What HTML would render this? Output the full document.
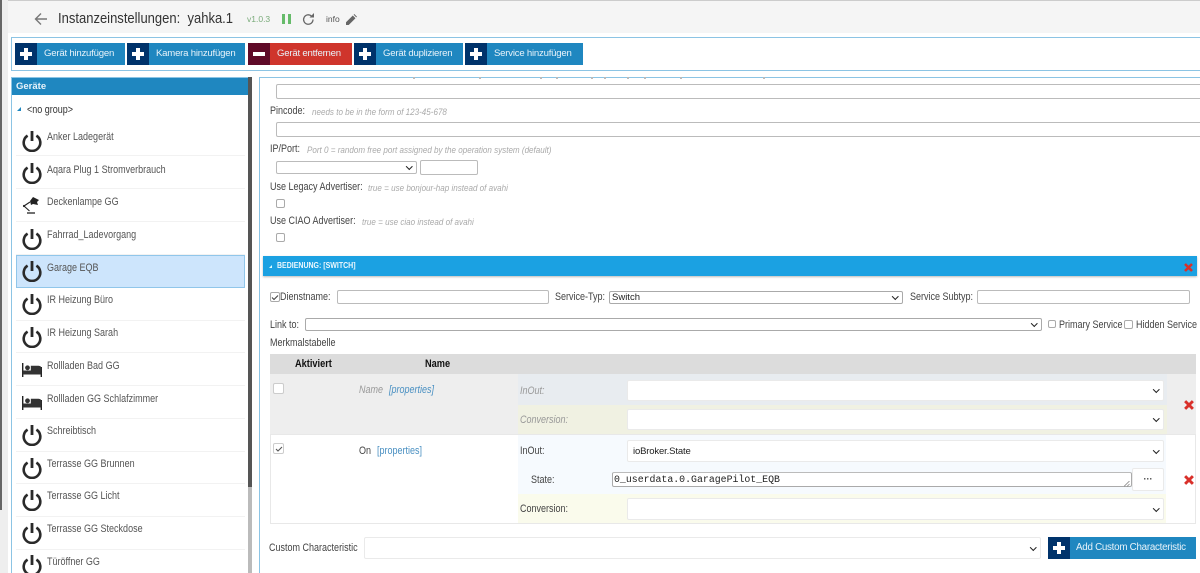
<!DOCTYPE html>
<html><head><meta charset="utf-8"><style>
html,body{margin:0;padding:0;background:#fff}
#p{position:relative;width:1200px;height:573px;overflow:hidden;background:#fff;font-family:"Liberation Sans",sans-serif;font-size:10px;color:#444}
#p div,#p svg{position:absolute;box-sizing:border-box}
.t{white-space:nowrap;line-height:14px;height:14px}
.l{font-size:10.6px;transform:scaleX(.85);transform-origin:left center;margin-top:1px}
.h{font-style:italic;color:#aaa;font-size:9.4px;transform:scaleX(.86);transform-origin:left center;margin-top:1px}
.b{height:22px;background:#1f87c0;color:#e8f3fa;font-size:9.6px;line-height:22px;white-space:nowrap;letter-spacing:-.22px}
.b i{position:absolute;left:0;top:0;width:22px;height:22px;background:#00336b}
.b i:before{content:"";position:absolute;left:5px;top:9px;width:12px;height:4px;background:#fff}
.b i:after{content:"";position:absolute;left:9px;top:5px;width:4px;height:12px;background:#fff}
.b i.m:after{display:none}
.i{border:1px solid #bbb;border-radius:2px;background:#fff}
.s{border:1px solid #eaeaea;border-radius:2px;background:#fff}
.c{border:1px solid #aaa;border-radius:2px;background:#fff;width:10px;height:10px}
.v:after{content:"";position:absolute;right:5px;top:50%;width:3.5px;height:3.5px;margin-top:-3.5px;border-right:1.4px solid #222;border-bottom:1.4px solid #222;transform:rotate(45deg)}
.r{left:16px;width:229px;height:33px;border-bottom:1px solid #f2f2f2}
.x{color:#555;left:47px}
.d{top:77px;width:2px;height:2px;background:#bbb}
</style></head><body><div id="p">
<svg width="0" height="0" style="left:0;top:0"><defs>
<symbol id="pw" viewBox="0 0 20 22"><path d="M10 1v10" stroke="#2a2a2a" stroke-width="2.8" fill="none"/><path d="M5.6 5.6A8.3 8.3 0 1 0 14.4 5.6" stroke="#2a2a2a" stroke-width="2.6" fill="none"/></symbol>
<symbol id="bed" viewBox="0 0 20 14"><path d="M0.7 0v14M19.3 4v10" stroke="#222" stroke-width="1.4"/><rect x="0.7" y="7.5" width="18.6" height="4" fill="#333"/><circle cx="5.5" cy="4.8" r="2.4" fill="#333"/><path d="M8.8 8V2.8h7.7q3 0 3 3V8z" fill="#333"/></symbol>
<symbol id="lamp" viewBox="0 0 18 20"><path d="M8 5L11 1l6 3-2 2 1 3-5-1-2 1z" fill="#222"/><path d="M8 6L2 10l5.5 5" stroke="#222" stroke-width="1.1" fill="none"/><circle cx="2" cy="10" r="1.1" fill="#222"/><path d="M5 17h8" stroke="#222" stroke-width="1.3"/></symbol>
<symbol id="rx" viewBox="0 0 9 9"><path d="M1 1l7 7M8 1L1 8" stroke="#d9302a" stroke-width="2.6"/></symbol>
</defs></svg>

<div style="left:0;top:0;width:1200px;height:33px;background:#f5f5f5"></div>
<div style="left:0;top:0;width:1200px;height:1px;background:#ccc"></div>
<div style="left:0;top:0;width:8px;height:573px;background:#eee"></div>
<div style="left:0;top:0;width:2px;height:510px;background:#666"></div>
<svg style="left:34px;top:12px" width="14" height="14" viewBox="0 0 14 14"><path d="M13 7H2M7 1.5L1.5 7 7 12.5" stroke="#777" stroke-width="1.4" fill="none"/></svg>
<div class="t" style="left:58px;top:10px;height:18px;line-height:18px;font-size:14.3px;color:#333;transform:scaleX(.91);transform-origin:left center">Instanzeinstellungen:&nbsp; yahka.1</div>
<div class="t" style="left:247px;top:12px;font-size:8.5px;color:#7aab7a">v1.0.3</div>
<div style="left:282px;top:14px;width:3px;height:10px;background:#66bb6a"></div>
<div style="left:287.5px;top:14px;width:3px;height:10px;background:#66bb6a"></div>
<svg style="left:302px;top:13px" width="13" height="13" viewBox="0 0 13 13"><path d="M11 6.5A4.7 4.7 0 1 1 9.4 3" stroke="#666" stroke-width="1.3" fill="none"/><path d="M7.5 4.5H12V0z" fill="#666"/></svg>
<div class="t" style="left:326px;top:12px;font-size:8.5px;color:#555">info</div>
<svg style="left:346px;top:14px" width="11" height="11" viewBox="0 0 11 11"><path d="M0 11V8.3L6.8 1.5l2.7 2.7L2.7 11zM7.6.7l.7-.7 2.7 2.7-.7.7z" fill="#666"/></svg>

<div style="left:11px;top:37px;width:1200px;height:34px;border:1px solid #8cc4e4;background:#fff"></div>
<div class="b" style="left:15px;top:43px;width:110px;padding-left:29px"><i></i>Gerät hinzufügen</div>
<div class="b" style="left:127px;top:43px;width:118px;padding-left:29px"><i></i>Kamera hinzufügen</div>
<div class="b" style="left:248px;top:43px;width:104px;padding-left:29px;background:#cf352c"><i class="m" style="background:#5f0a28"></i>Gerät entfernen</div>
<div class="b" style="left:354px;top:43px;width:109px;padding-left:29px"><i></i>Gerät duplizieren</div>
<div class="b" style="left:465px;top:43px;width:118px;padding-left:29px"><i></i>Service hinzufügen</div>

<div style="left:11px;top:77px;width:238px;height:510px;border:1px solid #8cc4e4;background:#fff"></div>
<div class="t" style="left:12px;top:78px;width:236px;height:17px;line-height:17px;background:#1f87c0;color:#e8f3fa;font-weight:bold;font-size:9.5px;padding-left:4px">Geräte</div>
<div style="left:248px;top:77px;width:4px;height:410px;background:#555"></div>
<div style="left:248px;top:487px;width:4px;height:86px;background:#bbb"></div>
<div style="left:17px;top:107px;width:0;height:0;border-left:4px solid transparent;border-bottom:4px solid #1f87c0"></div>
<div class="t l" style="left:27px;top:102px;color:#333">&lt;no group&gt;</div>

<div class="r" style="top:123px"></div><div class="r" style="top:156px"></div><div class="r" style="top:189px"></div><div class="r" style="top:222px"></div>
<div style="left:16px;top:255px;width:229px;height:33px;background:#cde5fc;border:1px solid #90c6ea"></div>
<div class="r" style="top:288px"></div><div class="r" style="top:320px"></div><div class="r" style="top:353px"></div><div class="r" style="top:386px"></div><div class="r" style="top:419px"></div><div class="r" style="top:451px"></div><div class="r" style="top:484px"></div><div class="r" style="top:517px"></div>

<div class="t l x" style="top:129px">Anker Ladegerät</div>
<div class="t l x" style="top:162px">Aqara Plug 1 Stromverbrauch</div>
<div class="t l x" style="top:194px">Deckenlampe GG</div>
<div class="t l x" style="top:227px">Fahrrad_Ladevorgang</div>
<div class="t l x" style="top:260px">Garage EQB</div>
<div class="t l x" style="top:292px">IR Heizung Büro</div>
<div class="t l x" style="top:325px">IR Heizung Sarah</div>
<div class="t l x" style="top:358px">Rollladen Bad GG</div>
<div class="t l x" style="top:391px">Rollladen GG Schlafzimmer</div>
<div class="t l x" style="top:423px">Schreibtisch</div>
<div class="t l x" style="top:456px">Terrasse GG Brunnen</div>
<div class="t l x" style="top:488px">Terrasse GG Licht</div>
<div class="t l x" style="top:521px">Terrasse GG Steckdose</div>
<div class="t l x" style="top:554px">Türöffner GG</div>

<svg style="left:22px;top:130px" width="20" height="22"><use href="#pw"/></svg>
<svg style="left:22px;top:162px" width="20" height="22"><use href="#pw"/></svg>
<svg style="left:22px;top:196px" width="18" height="20"><use href="#lamp"/></svg>
<svg style="left:22px;top:228px" width="20" height="22"><use href="#pw"/></svg>
<svg style="left:22px;top:260px" width="20" height="22"><use href="#pw"/></svg>
<svg style="left:22px;top:293px" width="20" height="22"><use href="#pw"/></svg>
<svg style="left:22px;top:326px" width="20" height="22"><use href="#pw"/></svg>
<svg style="left:22px;top:363px" width="20" height="14"><use href="#bed"/></svg>
<svg style="left:22px;top:396px" width="20" height="14"><use href="#bed"/></svg>
<svg style="left:22px;top:424px" width="20" height="22"><use href="#pw"/></svg>
<svg style="left:22px;top:457px" width="20" height="22"><use href="#pw"/></svg>
<svg style="left:22px;top:489px" width="20" height="22"><use href="#pw"/></svg>
<svg style="left:22px;top:522px" width="20" height="22"><use href="#pw"/></svg>
<svg style="left:22px;top:554px" width="20" height="22"><use href="#pw"/></svg>

<div style="left:259px;top:77px;width:960px;height:510px;border:1px solid #8cc4e4;background:#fff"></div>
<div class="d" style="left:413px"></div><div class="d" style="left:479px"></div><div class="d" style="left:540px"></div><div class="d" style="left:556px"></div><div class="d" style="left:591px"></div><div class="d" style="left:604px"></div><div class="d" style="left:627px"></div><div class="d" style="left:644px"></div><div class="d" style="left:680px"></div><div class="d" style="left:763px"></div>
<div class="i" style="left:276px;top:84px;width:935px;height:15px"></div>
<div class="t l" style="left:270px;top:103px">Pincode:</div>
<div class="t h" style="left:312px;top:104px">needs to be in the form of 123-45-678</div>
<div class="i" style="left:276px;top:122px;width:935px;height:15px"></div>
<div class="t l" style="left:270px;top:141px">IP/Port:</div>
<div class="t h" style="left:307px;top:142px">Port 0 = random free port assigned by the operation system (default)</div>
<div class="i v" style="left:276px;top:161px;width:141px;height:13px"></div>
<div class="i" style="left:420px;top:160px;width:58px;height:15px"></div>
<div class="t l" style="left:270px;top:179px">Use Legacy Advertiser:</div>
<div class="t h" style="left:368px;top:180px">true = use bonjour-hap instead of avahi</div>
<div class="c" style="left:276px;top:199px;width:9px;height:9px"></div>
<div class="t l" style="left:270px;top:213px">Use CIAO Advertiser:</div>
<div class="t h" style="left:361.500px;top:214px">true = use ciao instead of avahi</div>
<div class="c" style="left:276px;top:233px;width:9px;height:9px"></div>

<div style="left:263px;top:256px;width:934px;height:20px;background:#1ba1e2;box-shadow:0 1px 2px #bbb"></div>
<div style="left:269px;top:265px;width:0;height:0;border-left:3px solid transparent;border-bottom:3px solid #dff"></div>
<div class="t" style="left:276.500px;top:259px;font-size:8px;font-weight:bold;color:#eef8fd;transform:scaleX(.875);transform-origin:left center">BEDIENUNG: [SWITCH]</div>
<svg style="left:1184px;top:263px" width="9" height="9"><use href="#rx"/></svg>

<div class="c" style="left:270px;top:292px"></div>
<svg style="left:271px;top:294px" width="8" height="7"><path d="M1 3.5l2 2L7 1.5" stroke="#444" stroke-width="1.1" fill="none"/></svg>
<div class="t l" style="left:280px;top:289px">Dienstname:</div>
<div class="i" style="left:337px;top:290px;width:212px;height:14px"></div>
<div class="t l" style="left:555px;top:289px">Service-Typ:</div>
<div class="i v" style="left:609px;top:291px;width:294px;height:13px;border-color:#aaa"></div>
<div class="t" style="left:612px;top:291px;font-size:9.500px;color:#222">Switch</div>
<div class="t l" style="left:910px;top:289px">Service Subtyp:</div>
<div class="i" style="left:977px;top:290px;width:213px;height:14px"></div>
<div class="t l" style="left:270px;top:317px">Link to:</div>
<div class="i v" style="left:305px;top:318px;width:737px;height:13px;border-color:#aaa"></div>
<div class="c" style="left:1048px;top:320px;width:8px;height:8px"></div>
<div class="t l" style="left:1059px;top:317px">Primary Service</div>
<div class="c" style="left:1124px;top:320px;width:9px;height:9px"></div>
<div class="t l" style="left:1136px;top:317px">Hidden Service</div>
<div class="t l" style="left:270px;top:335px">Merkmalstabelle</div>

<div style="left:270px;top:354px;width:926px;height:20px;background:#dcdcdc"></div>
<div class="t l" style="left:295px;top:356px;font-weight:bold;color:#111;transform:scaleX(.87)">Aktiviert</div>
<div class="t l" style="left:425px;top:356px;font-weight:bold;color:#111;transform:scaleX(.87)">Name</div>
<div style="left:270px;top:374px;width:926px;height:60px;background:#eee"></div>
<div style="left:518px;top:374px;width:649px;height:31px;background:#e8ecf0"></div>
<div style="left:518px;top:405px;width:649px;height:29px;background:#f0f1e2"></div>
<div class="c" style="left:273px;top:383px;width:11px;height:11px;border-color:#ccc"></div>
<div class="t l" style="left:359px;top:382px;font-style:italic;color:#999">Name</div>
<div class="t l" style="left:389px;top:382px;font-style:italic;color:#4a90c2">[properties]</div>
<div class="t l" style="left:520px;top:383px;font-style:italic;color:#999">InOut:</div>
<div class="t l" style="left:520px;top:412px;font-style:italic;color:#999">Conversion:</div>
<div class="s v" style="left:627px;top:380px;width:537px;height:21px"></div>
<div class="s v" style="left:627px;top:409px;width:537px;height:21px"></div>
<svg style="left:1184px;top:400px" width="10" height="10"><use href="#rx"/></svg>

<div style="left:270px;top:434px;width:926px;height:90px;border:1px solid #e8e8e8;background:#fff"></div>
<div style="left:518px;top:435px;width:648px;height:59px;background:#f6fafe"></div>
<div style="left:518px;top:494px;width:648px;height:29px;background:#fafbec"></div>
<div class="c" style="left:273px;top:443px;width:11px;height:11px;border-color:#ccc"></div>
<svg style="left:275px;top:446px" width="8" height="6"><path d="M1 3l2 2L7 1" stroke="#555" stroke-width="1.1" fill="none"/></svg>
<div class="t l" style="left:359px;top:443px">On</div>
<div class="t l" style="left:377px;top:443px;color:#4a90c2">[properties]</div>
<div class="t l" style="left:520px;top:443px">InOut:</div>
<div class="s v" style="left:627px;top:440px;width:537px;height:22px"></div>
<div class="t" style="left:633px;top:445px;font-size:9.500px;color:#222;letter-spacing:-.15px">ioBroker.State</div>
<div class="t l" style="left:531px;top:472px">State:</div>
<div class="i" style="left:612px;top:472px;width:520px;height:15px;border-color:#aaa;border-top:1.5px solid #bbb"></div>
<svg style="left:1124px;top:481px" width="6" height="6"><path d="M0 5.5L5.500 0M3 5.500L5.500 3" stroke="#888" stroke-width=".8"/></svg>
<div class="t" style="left:614px;top:473px;font-family:'Liberation Mono',monospace;font-size:9.900px;color:#222">0_userdata.0.GaragePilot_EQB</div>
<div class="s" style="left:1132px;top:468px;width:32px;height:23px;text-align:center;line-height:21px;font-size:9px;font-weight:bold;color:#333;white-space:nowrap">···</div>
<svg style="left:1184px;top:475px" width="10" height="10"><use href="#rx"/></svg>
<div class="t l" style="left:520px;top:501px">Conversion:</div>
<div class="s v" style="left:627px;top:498px;width:537px;height:22px"></div>

<div class="t l" style="left:269px;top:540px">Custom Characteristic</div>
<div class="s v" style="left:364px;top:537px;width:677px;height:22px"></div>
<div class="b" style="left:1048px;top:537px;width:148px;padding-left:28px;font-size:9.8px;letter-spacing:-.27px"><i></i>Add Custom Characteristic</div>
</div></body></html>
